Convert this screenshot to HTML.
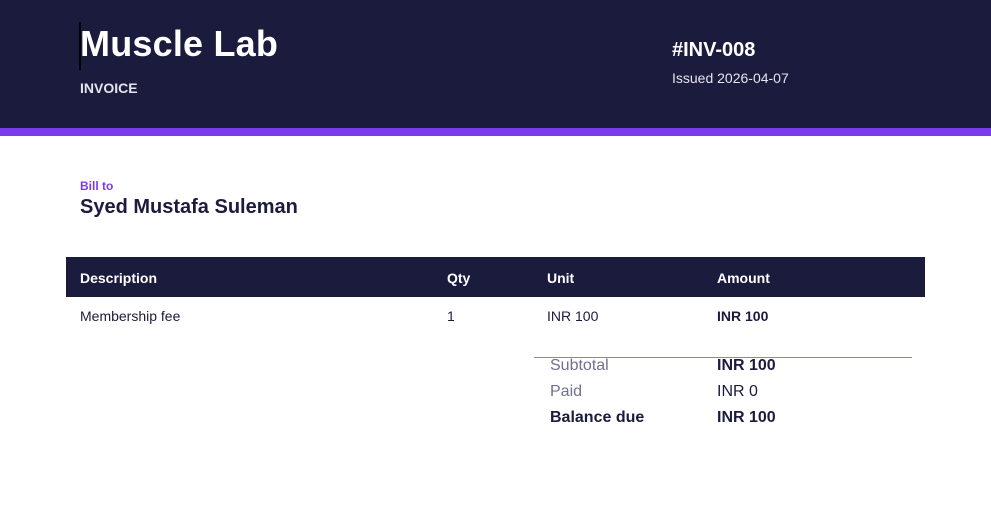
<!DOCTYPE html>
<html><head><meta charset="utf-8"><style>
*{margin:0;padding:0;box-sizing:border-box}
body{width:991px;height:528px;background:#fff;font-family:"Liberation Sans",Arial,sans-serif;position:relative;overflow:hidden;color:#1b1b3d}
.a{position:absolute;white-space:nowrap}
</style></head><body>
<div class="a" style="left:0;top:0;width:991px;height:128px;background:#1b1b3d"></div>
<div class="a" style="left:0;top:128px;width:991px;height:8px;background:#7c3aed"></div>
<div class="a" style="left:79px;top:22px;width:2px;height:48px;background:#000"></div>
<div class="a" style="left:80px;top:22px;font-size:36px;font-weight:bold;color:#fff;line-height:44px;letter-spacing:0.2px">Muscle Lab</div>
<div class="a" style="left:80px;top:80px;font-size:14px;font-weight:bold;color:#e4e4ee">INVOICE</div>
<div class="a" style="left:672px;top:39px;font-size:20px;font-weight:bold;color:#fff">#INV-008</div>
<div class="a" style="left:672px;top:70px;font-size:14px;color:#e4e4ee">Issued 2026-04-07</div>
<div class="a" style="left:80px;top:179px;font-size:12px;font-weight:bold;color:#7c3aed">Bill to</div>
<div class="a" style="left:80px;top:196px;font-size:20px;font-weight:bold">Syed Mustafa Suleman</div>
<div class="a" style="left:66px;top:257px;width:859px;height:40px;background:#1b1b3d"></div>
<div class="a" style="left:80px;top:270px;font-size:14px;font-weight:bold;color:#fff">Description</div>
<div class="a" style="left:447px;top:270px;font-size:14px;font-weight:bold;color:#fff">Qty</div>
<div class="a" style="left:547px;top:270px;font-size:14px;font-weight:bold;color:#fff">Unit</div>
<div class="a" style="left:717px;top:270px;font-size:14px;font-weight:bold;color:#fff">Amount</div>
<div class="a" style="left:80px;top:308px;font-size:14px">Membership fee</div>
<div class="a" style="left:447px;top:308px;font-size:14px">1</div>
<div class="a" style="left:547px;top:308px;font-size:14px">INR 100</div>
<div class="a" style="left:717px;top:308px;font-size:14px;font-weight:bold">INR 100</div>
<div class="a" style="left:534px;top:357px;width:378px;height:1px;background:#8a84b0"></div>
<div class="a" style="left:550px;top:357px;font-size:16px;color:#707090">Subtotal</div>
<div class="a" style="left:717px;top:357px;font-size:16px;font-weight:bold">INR 100</div>
<div class="a" style="left:550px;top:383px;font-size:16px;color:#707090">Paid</div>
<div class="a" style="left:717px;top:383px;font-size:16px">INR 0</div>
<div class="a" style="left:550px;top:409px;font-size:16px;font-weight:bold">Balance due</div>
<div class="a" style="left:717px;top:409px;font-size:16px;font-weight:bold">INR 100</div>
</body></html>
